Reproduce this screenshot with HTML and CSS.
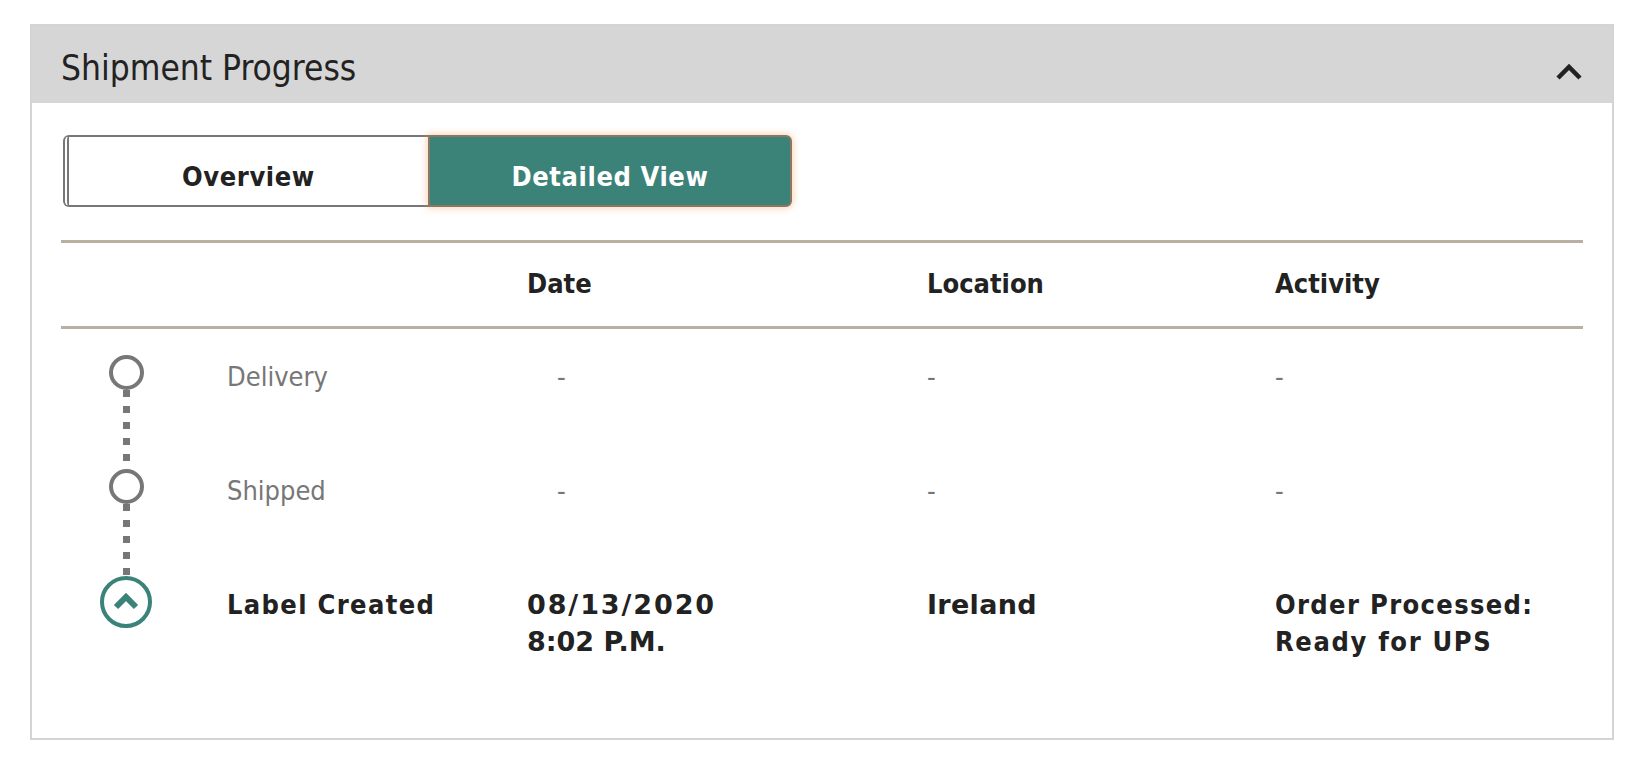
FILE: index.html
```html
<!DOCTYPE html>
<html lang="en">
<head>
<meta charset="utf-8">
<title>Shipment Progress</title>
<link rel="stylesheet" href="styles.css">
</head>
<body>
<section class="card">
  <header class="card-header">
    <h2 class="title">Shipment Progress</h2>
    <svg class="collapse" width="28" height="17" viewBox="0 0 28 17" aria-hidden="true">
      <polyline points="3,15 14,4 25,15" fill="none" stroke="#222" stroke-width="4.5" stroke-linejoin="miter"/>
    </svg>
  </header>
  <div class="card-body">
    <div class="toggle">
      <button class="tab tab-overview">Overview</button>
      <button class="tab tab-detailed">Detailed View</button>
    </div>

    <div class="progress-table">
      <div class="thead">
        <div></div>
        <div></div>
        <div class="th">Date</div>
        <div class="th">Location</div>
        <div class="th">Activity</div>
      </div>

      <div class="row">
        <div class="track"><span class="node"></span><span class="dots"></span></div>
        <div class="cell status">Delivery</div>
        <div class="cell dash dash-date">-</div>
        <div class="cell dash">-</div>
        <div class="cell dash">-</div>
      </div>

      <div class="row">
        <div class="track"><span class="node"></span><span class="dots"></span></div>
        <div class="cell status">Shipped</div>
        <div class="cell dash dash-date">-</div>
        <div class="cell dash">-</div>
        <div class="cell dash">-</div>
      </div>

      <div class="row row-current">
        <div class="track">
          <span class="node-current">
            <svg width="26" height="17" viewBox="0 0 26 17" aria-hidden="true">
              <polyline points="3,14 13,4 23,14" fill="none" stroke="#3b8279" stroke-width="6" stroke-linejoin="miter"/>
            </svg>
          </span>
        </div>
        <div class="cell strong">Label Created</div>
        <div class="cell strong wide-face"><span class="date-day">08/13/2020</span><br><span class="date-time">8:02 P.M.</span></div>
        <div class="cell strong wide-face place">Ireland</div>
        <div class="cell strong">Order Processed:<br><span class="wide">Ready for UPS</span></div>
      </div>
    </div>
  </div>
</section>
</body>
</html>
```

FILE: styles.css
```css
* {
  box-sizing: border-box;
}

html, body {
  margin: 0;
  padding: 0;
  background: #ffffff;
}

body {
  font-family: "DejaVu Sans Condensed", "DejaVu Sans", sans-serif;
  font-stretch: condensed;
  color: #222222;
}

.card {
  margin: 24px 0 0 30px;
  width: 1584px;
  border: 2px solid #d4d4d4;
  background: #ffffff;
}

.card-header {
  display: flex;
  justify-content: space-between;
  align-items: flex-start;
  height: 77px;
  padding: 22px 29px 0 29px;
  background: #d6d6d6;
}

.title {
  margin: 0;
  font-size: 35px;
  line-height: 40px;
  font-weight: normal;
  color: #222222;
}

.collapse {
  display: block;
  margin-top: 15px;
}

.card-body {
  padding: 32px 29px 41px 29px;
}

.toggle {
  display: flex;
  margin-left: 2px;
}

.tab {
  font-family: inherit;
  font-stretch: condensed;
  font-size: 27px;
  font-weight: bold;
  letter-spacing: 0.6px;
  line-height: 32px;
  height: 72px;
  padding: 24px 0 12px;
  text-align: center;
  cursor: pointer;
}

.tab-overview {
  width: 365px;
  background: #ffffff;
  color: #222222;
  border: 2px solid #777777;
  border-left: 6px double #777777;
  border-right: none;
  border-radius: 6px 0 0 6px;
}

.tab-detailed {
  width: 364px;
  background: #3b8279;
  color: #ffffff;
  border: 2px solid #8c7862;
  border-radius: 0 6px 6px 0;
  box-shadow: 0 0 7px 1px rgba(240, 150, 80, 0.45);
}

.progress-table {
  margin-top: 33px;
}

.thead,
.row {
  display: grid;
  grid-template-columns: 166px 300px 400px 348px 1fr;
}

.thead {
  border-top: 3px solid #b9b0a1;
  border-bottom: 3px solid #b9b0a1;
  padding: 23px 0 24px;
}

.th {
  font-size: 27px;
  font-weight: bold;
  line-height: 36px;
  color: #222222;
}

.row {
  height: 114px;
}

.thead + .row {
  margin-top: 26px;
}

.track {
  width: 130px;
  display: flex;
  flex-direction: column;
  align-items: center;
}

.node {
  width: 35px;
  height: 35px;
  flex: none;
  border: 4px solid #777777;
  border-radius: 50%;
  background: #ffffff;
}

.dots {
  flex: 1;
  width: 7px;
  background: repeating-linear-gradient(to bottom, #777777 0 7px, transparent 7px 16px);
}

.node-current {
  width: 52px;
  height: 52px;
  flex: none;
  margin-top: -7px;
  border: 4px solid #3b8279;
  border-radius: 50%;
  background: #ffffff;
  display: flex;
  align-items: center;
  justify-content: center;
}

.node-current svg {
  display: block;
  margin-top: -1px;
}

.cell {
  padding-top: 4px;
  font-size: 27px;
  line-height: 36px;
}

.status {
  color: #777777;
}

.dash {
  color: #777777;
}

.dash-date {
  padding-left: 30px;
}

.strong {
  font-weight: bold;
  color: #222222;
  letter-spacing: 1.35px;
  line-height: 37px;
  padding-top: 3px;
}

.wide-face {
  font-family: "DejaVu Sans", sans-serif;
  font-stretch: normal;
}

.date-day {
  letter-spacing: 1.9px;
}

.date-time {
  letter-spacing: 0;
}

.place {
  letter-spacing: 0.3px;
}

.wide {
  letter-spacing: 1.65px;
}
```
